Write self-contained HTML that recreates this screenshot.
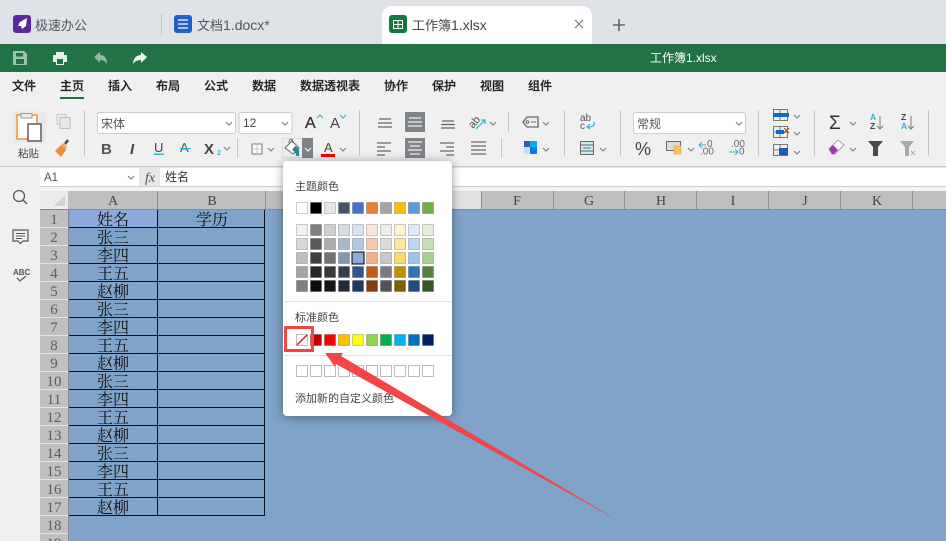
<!DOCTYPE html>
<html lang="zh"><head><meta charset="utf-8"><title>工作簿1.xlsx</title>
<style>
html,body{margin:0;padding:0;width:946px;height:541px;overflow:hidden;background:#fff}
svg{display:block}
text{font-family:"Liberation Sans","Noto Sans CJK SC",sans-serif}
.m{font-size:12px;fill:#222;font-weight:500;stroke:#222;stroke-width:.2}
.c{font-family:"Liberation Serif","Noto Serif CJK SC",serif;font-size:16px;fill:#111;text-anchor:middle}
.r{font-family:"Liberation Serif",serif;font-size:15px;fill:#5c5c5c;text-anchor:middle}
.h{font-family:"Liberation Serif",serif;font-size:14px;fill:#444;text-anchor:middle}
.p{font-size:11px;fill:#444}
</style></head><body>
<svg width="946" height="541" viewBox="0 0 946 541" xmlns="http://www.w3.org/2000/svg">
<defs><path id="v" d="M0 0l3 3 3-3" fill="none" stroke="#777"/></defs>
<!-- tab bar -->
<rect width="946" height="44" fill="#dfe2e7"/>
<rect x="13" y="15" width="18" height="18" rx="3" fill="#5b2a9e"/>
<path d="M27 18l-7 4-2 4 3 0 1 3 4-3z" fill="#fff"/>
<text x="35" y="30" font-size="13" fill="#555">极速办公</text>
<rect x="161" y="14" width="1" height="21" fill="#bfc2c6"/>
<rect x="174" y="15" width="18" height="18" rx="3" fill="#2360c4"/>
<path d="M178 20h10M178 24h10M178 28h10" stroke="#fff" stroke-width="1.300"/>
<text x="197" y="30" font-size="13" fill="#555">文档<tspan font-size="14">1.docx*</tspan></text>
<path d="M382 44V16a10 10 0 0 1 10-10h190a10 10 0 0 1 10 10v28z" fill="#fff"/>
<rect x="389" y="15" width="18" height="18" rx="3" fill="#14783f"/>
<path d="M393.500 20.500h9v8h-9zM393.500 24.500h9M398 20.500v8" fill="none" stroke="#fff" stroke-width="1"/>
<text x="412" y="30" font-size="13" fill="#444">工作簿<tspan font-size="14">1.xlsx</tspan></text>
<path d="M575 20l8 8M583 20l-8 8" stroke="#777" stroke-width="1.200"/>
<path d="M619 19v12M613 25h12" stroke="#666" stroke-width="1.600"/>
<!-- green bar -->
<rect y="44" width="946" height="28" fill="#217346"/>
<path d="M13 51h11l3 3v11H13z" fill="#9cc4ad"/><rect x="16" y="53" width="7" height="3.500" fill="#217346"/><rect x="16" y="59" width="8" height="5" fill="#217346"/>
<path d="M56 52h8v3h3v7h-3v3h-8v-3h-3v-7h3z" fill="#e6f0ea"/><rect x="57" y="59" width="6" height="5" fill="#217346"/>
<path d="M94 57l6-5v3c5 0 7 4 7 9-2-3-4-4-7-4v3z" fill="#8fbca3"/>
<path d="M147 57l-6-5v3c-5 0-8 4-8 9 2-3 5-4 8-4v3z" fill="#eef5f1"/>
<text x="650" y="62" font-size="12" fill="#fff">工作簿1.xlsx</text>
<!-- ribbon -->
<rect y="72" width="946" height="94" fill="#f0f0f0"/>
<rect y="166" width="946" height="1.500" fill="#c8c8c8"/>
<text class="m" x="12" y="90">文件</text><text class="m" x="60" y="90">主页</text><text class="m" x="108" y="90">插入</text><text class="m" x="156" y="90">布局</text><text class="m" x="204" y="90">公式</text><text class="m" x="252" y="90">数据</text><text class="m" x="300" y="90">数据透视表</text><text class="m" x="384" y="90">协作</text><text class="m" x="432" y="90">保护</text><text class="m" x="480" y="90">视图</text><text class="m" x="528" y="90">组件</text>
<rect x="60" y="97" width="24" height="2" fill="#217346"/>
<!-- separators -->
<g fill="#c4c4c4"><rect x="84" y="110" width="1" height="46"/><rect x="237" y="138" width="1" height="20"/><rect x="359" y="110" width="1" height="46"/><rect x="508" y="112" width="1" height="20"/><rect x="501" y="138" width="1" height="20"/><rect x="564" y="110" width="1" height="46"/><rect x="620" y="110" width="1" height="46"/><rect x="758" y="110" width="1" height="46"/><rect x="814" y="110" width="1" height="46"/><rect x="928" y="110" width="1" height="46"/></g>
<!-- paste -->
<rect x="13" y="111" width="33" height="32" fill="#eaeaea"/>
<rect x="17" y="115" width="20" height="24" fill="#fff" stroke="#f2a85e" stroke-width="2"/>
<rect x="21" y="113.500" width="11" height="4.500" fill="#eee" stroke="#999"/>
<rect x="28" y="124" width="13" height="17" fill="#fff" stroke="#666" stroke-width="1.600"/>
<text x="18" y="157" font-size="10.500" fill="#444">粘贴</text>
<rect x="57" y="114.500" width="9" height="10" fill="#eee" stroke="#c4c4c4"/><rect x="60" y="117.500" width="10" height="11" fill="#e8e8e8" stroke="#bbb"/>
<path d="M55 151l6-6 5 5-5 7z" fill="#ee8c35"/><path d="M61 145l2-2 4 4-1 3z" fill="#f3a55e"/><path d="M64 143l3-4 2 2-3 4z" fill="#555"/>
<!-- font boxes -->
<rect x="97.500" y="112.500" width="138" height="21" rx="2" fill="#fff" stroke="#ccc"/>
<text x="101" y="128" font-size="12" fill="#555">宋体</text><use href="#v" x="226" y="122"/>
<rect x="239" y="112.500" width="53" height="21" rx="2" fill="#fff" stroke="#ccc"/>
<text x="243" y="127" font-size="12" fill="#444">12</text><use href="#v" x="282" y="122"/>
<text x="305" y="128" font-size="16" fill="#333" stroke="#333" stroke-width=".3">A</text><path d="M317 118l3-3 3 3" fill="none" stroke="#29b6d0" stroke-width="1.200"/>
<text x="330" y="128" font-size="15" fill="#444">A</text><path d="M340 115l3 3 3-3" fill="none" stroke="#29b6d0" stroke-width="1.200"/>
<text x="101" y="154" font-size="15" font-weight="700" fill="#555">B</text>
<text x="130" y="154" font-size="15" font-weight="700" font-style="italic" fill="#444">I</text>
<text x="154" y="152" font-size="13" fill="#444">U</text><rect x="154" y="153.500" width="10" height="1.500" fill="#29b6d0"/>
<text x="180" y="152" font-size="13" fill="#555">A</text><rect x="180" y="148" width="11" height="1" fill="#29b6d0"/>
<text x="204" y="154" font-size="15" font-weight="700" fill="#444">X</text><text x="217" y="155" font-size="7" font-weight="700" fill="#29b6d0">2</text><use href="#v" x="224" y="147"/>
<rect x="252" y="144" width="10" height="10" fill="#fff" stroke="#777"/><path d="M257 145v8M253 149h8" stroke="#ccc"/><use href="#v" x="268" y="148"/>
<rect x="282.500" y="138.500" width="20" height="19" fill="#f0f0f0" stroke="#ddd"/>
<path d="M285 148l7-7 7 7-6 6z" fill="#fff" stroke="#666"/><path d="M289 143c0-5 4-5 4 0" fill="none" stroke="#666"/><path d="M295 146c3 1 5 4 4 10h-3c0-3-2-5-4-6z" fill="#1f8d9e"/>
<rect x="302" y="138" width="11" height="20" fill="#7f8489"/><path d="M305 148l3 3 3-3" fill="none" stroke="#fff"/>
<text x="324" y="152" font-size="13" fill="#444">A</text><rect x="321" y="154" width="14" height="3" fill="#ff0000"/><use href="#v" x="340" y="148"/>
<!-- align -->
<rect x="405" y="112" width="20" height="20" fill="#7f8489"/><rect x="405" y="138" width="20" height="20" fill="#7f8489"/>
<g stroke="#666" stroke-width="1.300"><path d="M379 119h12M378 123h14M378 127h14"/><path d="M442 121h12M441 124.500h14M441 128h14"/><path d="M377 143h14M377 147h8M377 151h14M377 155h8"/><path d="M440 143h14M446 147h8M440 151h14M446 155h8"/><path d="M471 142h15M471 146h15M471 150h15M471 154h15"/></g>
<path d="M409 118h12M408 122h14M408 126h14M408 142h14M410 146h10M408 150h14M410 154h10" stroke="#eee" stroke-width="1.200"/>
<text x="0" y="0" font-size="11" fill="#555" transform="translate(473 129) rotate(-50)">ab</text><path d="M476 129l9-9M481 120h4v4" fill="none" stroke="#29b6d0" stroke-width="1.200"/><use href="#v" x="490" y="122"/>
<path d="M527 117h11v10h-11l-4-5z" fill="none" stroke="#666" stroke-width="1.300"/><circle cx="527.500" cy="122" r="1.300" fill="none" stroke="#666"/><path d="M531 122h5" stroke="#666"/><use href="#v" x="543" y="122"/>
<rect x="524" y="141" width="6" height="6" fill="#2f5da8"/><rect x="530" y="141" width="7" height="6" fill="#00b0f0"/><rect x="524" y="147" width="6" height="7" fill="#bfe0f8"/><rect x="530" y="147" width="7" height="7" fill="#0b78e8"/><use href="#v" x="543" y="148"/>
<text x="580" y="121" font-size="10" fill="#555">ab</text><text x="580" y="129" font-size="10" fill="#555">c</text><path d="M594 122c1 4-2 5-6 5M590 124l-3 3 3 2" fill="none" stroke="#29b6d0" stroke-width="1.200"/>
<rect x="580.500" y="141.500" width="13" height="13" fill="#cfeaee" stroke="#666"/><path d="M581 145h12M581 151h12" stroke="#666"/><path d="M583 148h8" stroke="#1f8d9e"/><use href="#v" x="600" y="148"/>
<!-- number -->
<rect x="633.500" y="112.500" width="112" height="21" rx="2" fill="#fff" stroke="#ccc"/>
<text x="637" y="128" font-size="12" fill="#555">常规</text><use href="#v" x="736" y="122"/>
<text x="635" y="155" font-size="18" fill="#444">%</text>
<rect x="666.500" y="141.500" width="14" height="9" fill="#ddd" stroke="#666"/><rect x="674" y="146" width="7" height="8" fill="#f4c26a" stroke="#e8a63a" stroke-width=".6"/><use href="#v" x="688" y="148"/>
<text x="707" y="147" font-size="10" fill="#666">0</text><text x="700" y="154.500" font-size="10" fill="#666">.00</text><path d="M706 145h-7M702 142l-3 3 3 3" fill="none" stroke="#29b6d0"/>
<text x="731" y="147" font-size="10" fill="#666">.00</text><text x="739" y="154.500" font-size="10" fill="#666">0</text><path d="M729 152h9M735 149l3 3-3 3" fill="none" stroke="#29b6d0"/>
<!-- cells -->
<g fill="none" stroke="#777"><path d="M773.500 109.500h14v11h-14zM773.500 115h14M780 109.500v11"/><path d="M773.500 126.500h14v11h-14zM773.500 132h14M780 126.500v11"/><path d="M773.500 144.500h14v11h-14zM773.500 150h14M780 144.500v11"/></g>
<rect x="773" y="113" width="16" height="4" fill="#0b6cc4"/><rect x="776" y="130" width="8" height="4" fill="#0b6cc4"/><path d="M784 128l5 5M789 128l-5 5" stroke="#8a4a3a"/><rect x="779" y="148" width="9" height="7" fill="#1c5fae"/>
<use href="#v" x="794" y="115"/><use href="#v" x="794" y="132"/><use href="#v" x="794" y="151"/>
<text x="829" y="129" font-size="19" fill="#333">Σ</text><use href="#v" x="850" y="122"/>
<text x="870" y="120" font-size="8.500" font-weight="700" fill="#29b6d0">A</text><text x="870" y="129" font-size="8.500" font-weight="700" fill="#444">Z</text><path d="M880 116v13M877 126l3 3 3-3" fill="none" stroke="#777"/>
<text x="901" y="120" font-size="8.500" font-weight="700" fill="#444">Z</text><text x="901" y="129" font-size="8.500" font-weight="700" fill="#29b6d0">A</text><path d="M911 116v13M908 126l3 3 3-3" fill="none" stroke="#777"/>
<path d="M829 149l9-9 6 5-9 9h-3z" fill="#fff" stroke="#c98ad0"/><path d="M829 149l4-4 5 5-4 4h-2z" fill="#9a38a8"/><use href="#v" x="850" y="148"/>
<path d="M868 141h15l-5 6v9h-5v-9z" fill="#4a4a4a"/>
<path d="M900 141h14l-5 6v9h-4v-9z" fill="#aaa"/><path d="M911 151l4 4M915 151l-4 4" stroke="#aaa"/>
<!-- formula bar -->
<rect x="40" y="168" width="906" height="18" fill="#fff"/>
<rect x="139" y="168" width="21" height="18" fill="#e8e8e8"/>
<text x="44" y="181" font-size="11.500" fill="#555">A1</text><use href="#v" x="128" y="176"/>
<text x="145" y="182" font-size="14" font-style="italic" fill="#555" style="font-family:'Liberation Serif',serif">fx</text>
<text x="165" y="181" font-size="12" fill="#333">姓名</text>
<rect x="40" y="186" width="906" height="5" fill="#f4f4f4"/><rect x="40" y="186" width="906" height="1" fill="#d0d0d0"/>
<!-- sidebar -->
<rect y="167" width="40" height="374" fill="#f0f0f0"/>
<circle cx="19" cy="196" r="5.500" fill="none" stroke="#555" stroke-width="1.200"/><path d="M23 200l4 4" stroke="#555" stroke-width="1.300"/>
<path d="M13 230h15v11h-5l-2.500 2.500L18 241h-5z" fill="none" stroke="#555" stroke-width="1.200"/><path d="M16 233.500h9M16 236h9M16 238.500h6" stroke="#555"/>
<text x="13" y="275" font-size="8" font-weight="700" fill="#555">ABC</text><path d="M17 278l3 3 6-5" fill="none" stroke="#555" stroke-width="1.200"/>
<!-- headers -->
<rect x="40" y="191" width="906" height="18" fill="#bfbfbf"/>
<rect x="40" y="191" width="28" height="18" fill="#ececec"/><path d="M65 195v11H54z" fill="#d2d2d2"/>
<rect x="452" y="191" width="29" height="18" fill="#e0e0e0"/>
<rect x="40" y="209" width="906" height="1.500" fill="#8a8a8a"/>
<g fill="#8f8f8f"><rect x="157" y="191" width="1" height="18"/><rect x="265" y="191" width="1" height="18"/><rect x="481" y="191" width="1" height="18"/><rect x="553" y="191" width="1" height="18"/><rect x="624" y="191" width="1" height="18"/><rect x="696" y="191" width="1" height="18"/><rect x="768" y="191" width="1" height="18"/><rect x="840" y="191" width="1" height="18"/><rect x="912" y="191" width="1" height="18"/></g>
<text class="h" x="113" y="205">A</text><text class="h" x="212" y="205">B</text><text class="h" x="517" y="205">F</text><text class="h" x="589" y="205">G</text><text class="h" x="661" y="205">H</text><text class="h" x="733" y="205">I</text><text class="h" x="805" y="205">J</text><text class="h" x="877" y="205">K</text>
<!-- sheet -->
<rect x="69" y="210" width="877" height="331" fill="#7fa3c9"/>
<rect x="70" y="210" width="87" height="17" fill="#8ea9db"/>
<rect x="40" y="210" width="28" height="331" fill="#c0c0c0"/><rect x="68" y="210" width="1" height="331" fill="#8a8a8a"/>
<g stroke="#0a0f14" fill="none"><path d="M157.500 210v306M264.500 210v306"/><path d="M69 227.500h196M69 245.500h196M69 263.500h196M69 281.500h196M69 299.500h196M69 317.500h196M69 335.500h196M69 353.500h196M69 371.500h196M69 389.500h196M69 407.500h196M69 425.500h196M69 443.500h196M69 461.500h196M69 479.500h196M69 497.500h196M69 515.500h196"/></g>
<g stroke="#e4e4e4"><path d="M40 227.500h28M40 245.500h28M40 263.500h28M40 281.500h28M40 299.500h28M40 317.500h28M40 335.500h28M40 353.500h28M40 371.500h28M40 389.500h28M40 407.500h28M40 425.500h28M40 443.500h28M40 461.500h28M40 479.500h28M40 497.500h28M40 515.500h28M40 533.500h28"/></g>
<text class="r" x="54" y="224">1</text><text class="r" x="54" y="242">2</text><text class="r" x="54" y="260">3</text><text class="r" x="54" y="278">4</text><text class="r" x="54" y="296">5</text><text class="r" x="54" y="314">6</text><text class="r" x="54" y="332">7</text><text class="r" x="54" y="350">8</text><text class="r" x="54" y="368">9</text><text class="r" x="54" y="386">10</text><text class="r" x="54" y="404">11</text><text class="r" x="54" y="422">12</text><text class="r" x="54" y="440">13</text><text class="r" x="54" y="458">14</text><text class="r" x="54" y="476">15</text><text class="r" x="54" y="494">16</text><text class="r" x="54" y="512">17</text><text class="r" x="54" y="530">18</text><text class="r" x="54" y="548">19</text>
<text class="c" x="113" y="225">姓名</text><text class="c" x="212" y="225">学历</text>
<text class="c" x="113" y="243">张三</text><text class="c" x="113" y="261">李四</text><text class="c" x="113" y="279">王五</text><text class="c" x="113" y="297">赵柳</text><text class="c" x="113" y="315">张三</text><text class="c" x="113" y="333">李四</text><text class="c" x="113" y="351">王五</text><text class="c" x="113" y="369">赵柳</text><text class="c" x="113" y="387">张三</text><text class="c" x="113" y="405">李四</text><text class="c" x="113" y="423">王五</text><text class="c" x="113" y="441">赵柳</text><text class="c" x="113" y="459">张三</text><text class="c" x="113" y="477">李四</text><text class="c" x="113" y="495">王五</text><text class="c" x="113" y="513">赵柳</text>
<!-- popup -->
<rect x="283" y="161" width="169" height="255" rx="4" fill="#fff" style="filter:drop-shadow(0 1px 5px rgba(0,0,0,.4))"/>
<text class="p" x="295" y="190">主题颜色</text>
<g stroke="#000" stroke-opacity=".2">
<rect x="296.500" y="202.500" width="11" height="11" fill="#fff"/><rect x="310.500" y="202.500" width="11" height="11" fill="#000"/><rect x="324.500" y="202.500" width="11" height="11" fill="#e7e6e6"/><rect x="338.500" y="202.500" width="11" height="11" fill="#44546a"/><rect x="352.500" y="202.500" width="11" height="11" fill="#4472c4"/><rect x="366.500" y="202.500" width="11" height="11" fill="#ed7d31"/><rect x="380.500" y="202.500" width="11" height="11" fill="#a5a5a5"/><rect x="394.500" y="202.500" width="11" height="11" fill="#ffc000"/><rect x="408.500" y="202.500" width="11" height="11" fill="#5b9bd5"/><rect x="422.500" y="202.500" width="11" height="11" fill="#70ad47"/>
<rect x="296.500" y="224.500" width="11" height="11" fill="#f2f2f2"/><rect x="310.500" y="224.500" width="11" height="11" fill="#7f7f7f"/><rect x="324.500" y="224.500" width="11" height="11" fill="#d0cece"/><rect x="338.500" y="224.500" width="11" height="11" fill="#d6dce4"/><rect x="352.500" y="224.500" width="11" height="11" fill="#d9e2f3"/><rect x="366.500" y="224.500" width="11" height="11" fill="#fbe5d5"/><rect x="380.500" y="224.500" width="11" height="11" fill="#ededed"/><rect x="394.500" y="224.500" width="11" height="11" fill="#fff2cc"/><rect x="408.500" y="224.500" width="11" height="11" fill="#deeaf6"/><rect x="422.500" y="224.500" width="11" height="11" fill="#e2efd9"/>
<rect x="296.500" y="238.500" width="11" height="11" fill="#d8d8d8"/><rect x="310.500" y="238.500" width="11" height="11" fill="#595959"/><rect x="324.500" y="238.500" width="11" height="11" fill="#aeabab"/><rect x="338.500" y="238.500" width="11" height="11" fill="#adb9ca"/><rect x="352.500" y="238.500" width="11" height="11" fill="#b4c6e7"/><rect x="366.500" y="238.500" width="11" height="11" fill="#f7caac"/><rect x="380.500" y="238.500" width="11" height="11" fill="#dbdbdb"/><rect x="394.500" y="238.500" width="11" height="11" fill="#ffe598"/><rect x="408.500" y="238.500" width="11" height="11" fill="#bdd7ee"/><rect x="422.500" y="238.500" width="11" height="11" fill="#c5e0b3"/>
<rect x="296.500" y="252.500" width="11" height="11" fill="#bfbfbf"/><rect x="310.500" y="252.500" width="11" height="11" fill="#3f3f3f"/><rect x="324.500" y="252.500" width="11" height="11" fill="#757070"/><rect x="338.500" y="252.500" width="11" height="11" fill="#8496b0"/><rect x="366.500" y="252.500" width="11" height="11" fill="#f4b183"/><rect x="380.500" y="252.500" width="11" height="11" fill="#c9c9c9"/><rect x="394.500" y="252.500" width="11" height="11" fill="#ffd966"/><rect x="408.500" y="252.500" width="11" height="11" fill="#9dc3e6"/><rect x="422.500" y="252.500" width="11" height="11" fill="#a8d08d"/>
<rect x="296.500" y="266.500" width="11" height="11" fill="#a5a5a5"/><rect x="310.500" y="266.500" width="11" height="11" fill="#262626"/><rect x="324.500" y="266.500" width="11" height="11" fill="#3a3838"/><rect x="338.500" y="266.500" width="11" height="11" fill="#323f4f"/><rect x="352.500" y="266.500" width="11" height="11" fill="#2f5496"/><rect x="366.500" y="266.500" width="11" height="11" fill="#c55a11"/><rect x="380.500" y="266.500" width="11" height="11" fill="#7b7b7b"/><rect x="394.500" y="266.500" width="11" height="11" fill="#bf9000"/><rect x="408.500" y="266.500" width="11" height="11" fill="#2e75b5"/><rect x="422.500" y="266.500" width="11" height="11" fill="#538135"/>
<rect x="296.500" y="280.500" width="11" height="11" fill="#7f7f7f"/><rect x="310.500" y="280.500" width="11" height="11" fill="#0c0c0c"/><rect x="324.500" y="280.500" width="11" height="11" fill="#171616"/><rect x="338.500" y="280.500" width="11" height="11" fill="#222a35"/><rect x="352.500" y="280.500" width="11" height="11" fill="#1f3864"/><rect x="366.500" y="280.500" width="11" height="11" fill="#833c0b"/><rect x="380.500" y="280.500" width="11" height="11" fill="#525252"/><rect x="394.500" y="280.500" width="11" height="11" fill="#7f6000"/><rect x="408.500" y="280.500" width="11" height="11" fill="#1e4e79"/><rect x="422.500" y="280.500" width="11" height="11" fill="#375623"/>
<rect x="310.500" y="334.500" width="11" height="11" fill="#c00000"/><rect x="324.500" y="334.500" width="11" height="11" fill="#ff0000"/><rect x="338.500" y="334.500" width="11" height="11" fill="#ffc000"/><rect x="352.500" y="334.500" width="11" height="11" fill="#ffff00"/><rect x="366.500" y="334.500" width="11" height="11" fill="#92d050"/><rect x="380.500" y="334.500" width="11" height="11" fill="#00b050"/><rect x="394.500" y="334.500" width="11" height="11" fill="#00b0f0"/><rect x="408.500" y="334.500" width="11" height="11" fill="#0070c0"/><rect x="422.500" y="334.500" width="11" height="11" fill="#002060"/>
</g>
<rect x="352" y="252" width="12" height="12" fill="#8eaadb" stroke="#000" stroke-width="1"/>
<rect x="296.500" y="334.500" width="11" height="11" fill="#fff" stroke="#bbb"/><path d="M297 345l10-10" stroke="#f0142a" stroke-width="1.500"/>
<path d="M284 301.500h168M284 355.500h168" stroke="#e2e2e2"/>
<text class="p" x="295" y="321">标准颜色</text>
<g fill="#fff" stroke="#bbb"><rect x="296.500" y="365.500" width="11" height="11"/><rect x="310.500" y="365.500" width="11" height="11"/><rect x="324.500" y="365.500" width="11" height="11"/><rect x="338.500" y="365.500" width="11" height="11"/><rect x="352.500" y="365.500" width="11" height="11"/><rect x="366.500" y="365.500" width="11" height="11"/><rect x="380.500" y="365.500" width="11" height="11"/><rect x="394.500" y="365.500" width="11" height="11"/><rect x="408.500" y="365.500" width="11" height="11"/><rect x="422.500" y="365.500" width="11" height="11"/></g>
<text class="p" x="295" y="402">添加新的自定义颜色</text>
<!-- annotation -->
<rect x="285.500" y="327.500" width="27" height="23" fill="none" stroke="#f44444" stroke-width="3"/>
<path d="M325 353L343 353L341 356L619 521L336 364L335 367z" fill="#f44444"/>
</svg>
</body></html>
